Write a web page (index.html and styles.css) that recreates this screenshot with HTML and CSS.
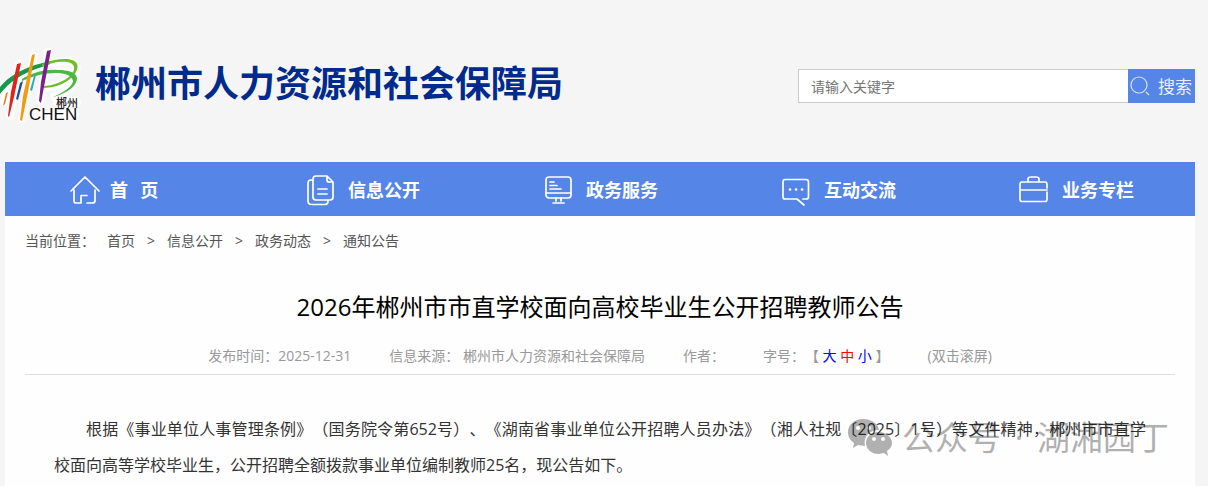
FILE: index.html
```html
<!DOCTYPE html>
<html lang="zh-CN">
<head>
<meta charset="utf-8">
<title>2026年郴州市市直学校面向高校毕业生公开招聘教师公告</title>
<link rel="stylesheet" href="styles.css">
</head>
<body>
<header class="header">
  <div class="brand">
    <svg class="logo" viewBox="0 0 84 84" aria-hidden="true">
      <g fill="none" stroke="#fff" stroke-linecap="round" stroke-linejoin="round">
        <path stroke-width="8" d="M2 46C16 28 50 18 66 17C78 17 79 26 73 32C66 39 56 43 43 44M54 52C66 49 75 42 76 34C74 28 66 26 56 27M19 20L10 72M34 12L22 74M48 8L40 57M6 50L4 58"/>
        <path stroke-width="10" d="M58 58H76M34 71H74"/>
      </g>
      <path fill="#149a49" d="M0 43C8 33 20 26 35 21L50 17L50 20L36 25C22 30 10 37 0 50Z"/>
      <path fill="#6cbe2c" d="M42 20C56 14 74 13 77 20C80 28 69 37 62 40C55 43 48 44 42 44L42 42C54 42 65 37 71 31C77 24 74 19 67 18C58 17 50 19 42 23Z"/>
      <path fill="#4cb648" d="M22 35C34 28 46 25 58 26C68 26 76 28 77 34C77 43 65 50 53 53C63 49 73 42 73 37C72 31 64 29 56 29C44 29 33 32 22 37Z"/>
      <path fill="#e2231a" d="M17 20L21 19L14 53L9 73L8 72L11 48Z"/>
      <path fill="#f39a10" d="M32 11L35 10L28 48L22 77L20 76L23 52Z"/>
      <path fill="#7b1f8c" d="M47 7L51 6L43 48L41 59L39 57L41 38Z"/>
      <path fill="#1b4d9c" d="M20 39L23 37L18 56L16 55Z"/>
      <path fill="#29a7c9" d="M34 32L36 31L32 47L30 46Z"/>
      <path fill="#ef7d1a" d="M6 49L8 48L5 60L3 62Z"/>
      <text class="logo-cn" x="56" y="63">郴州</text>
      <text class="logo-en" x="29" y="76">CHEN</text>
    </svg>
    <h1 class="site-name">郴州市人力资源和社会保障局</h1>
  </div>
  <form class="search">
    <input class="search-input" type="text" placeholder="请输入关键字" aria-label="请输入关键字">
    <button class="search-button" type="button">
      <svg class="search-icon" viewBox="0 0 22 22" aria-hidden="true"><circle cx="10" cy="10" r="8"/><path d="M17 17l3 3"/></svg>
      <span>搜索</span>
    </button>
  </form>
</header>

<nav class="nav">
  <a class="nav-item" href="#">
    <svg class="nav-icon" viewBox="0 0 32 32" aria-hidden="true"><path d="M4 18L18 4L32 18M7 17V28Q7 30 9 30H14V22.500H20M20 30H25Q28 30 28 28V17"/></svg>
    <span class="nav-text">首&nbsp;&nbsp; 页</span>
  </a>
  <a class="nav-item" href="#">
    <svg class="nav-icon" viewBox="0 0 32 32" aria-hidden="true"><path d="M22 3H11Q8 3 8 6V24Q8 27 11 27H25Q28 27 28 24V9ZM22 3V7Q22 9 24 9H28M8 7H6Q3 7 3 10V28Q3 31.500 7 31.500H20Q23 31.500 23 28M13 16H22M13 21H22"/></svg>
    <span class="nav-text">信息公开</span>
  </a>
  <a class="nav-item" href="#">
    <svg class="nav-icon" viewBox="0 0 32 32" aria-hidden="true"><rect x="3" y="4" width="25" height="21" rx="3"/><path d="M3 20H28M7 9H11M7 12.500H14M7 16H18M13 25V28M18 25V28M10 30H21"/></svg>
    <span class="nav-text">政务服务</span>
  </a>
  <a class="nav-item" href="#">
    <svg class="nav-icon" viewBox="0 0 32 32" aria-hidden="true"><path d="M22 26H25Q27.500 26 27.500 24V9Q27.500 6.500 25 6.500H4Q2 6.500 2 9V24Q2 26 4 26H16L23 32"/><path class="dots" d="M9 16.500h.1M15 16.500h.1M21 16.500h.1"/></svg>
    <span class="nav-text">互动交流</span>
  </a>
  <a class="nav-item" href="#">
    <svg class="nav-icon" viewBox="0 0 32 32" aria-hidden="true"><path d="M28 15V11.500Q28 9 26 9H3Q1 9 1 11.500V26Q1 28.500 3 28.500H26Q28 28.500 28 26V19M1 17H28M9 9V6Q9 4 12 4H17Q20 4 20 6V9"/></svg>
    <span class="nav-text">业务专栏</span>
  </a>
</nav>

<main class="page">
  <div class="crumbs">
    <span>当前位置：</span>
    <a href="#">首页</a><span>&gt;</span>
    <a href="#">信息公开</a><span>&gt;</span>
    <a href="#">政务动态</a><span>&gt;</span>
    <a href="#">通知公告</a>
  </div>
  <article>
    <h2 class="title">2026年郴州市市直学校面向高校毕业生公开招聘教师公告</h2>
    <div class="meta">
      <span>发布时间：2025-12-31</span>
      <span>信息来源： 郴州市人力资源和社会保障局</span>
      <span>作者：</span>
      <span>字号：【 <a class="size" href="#">大</a> <a class="size current" href="#">中</a> <a class="size" href="#">小</a> 】</span>
      <span>(双击滚屏)</span>
    </div>
    <div class="content">
      <p class="paragraph">根据《事业单位人事管理条例》（国务院令第652号）、《湖南省事业单位公开招聘人员办法》（湘人社规〔2025〕1号）等文件精神，郴州市市直学校面向高等学校毕业生，公开招聘全额拨款事业单位编制教师25名，现公告如下。</p>
      <div class="watermark">
        <svg class="watermark-icon" viewBox="0 0 44 38" aria-hidden="true">
          <path fill-rule="evenodd" d="M15 0C6 0 0 6 0 13C0 18 2 21 6 24L5 29L10 26L17 27C15 17 22 11 31 11C30 4 23 0 15 0ZM10 7a2 2 0 1 1 0 4a2 2 0 1 1 0-4M21 7a2 2 0 1 1 0 4a2 2 0 1 1 0-4"/>
          <path fill-rule="evenodd" d="M31 13C23 13 18 18 18 24C18 30 23 35 31 35L36 34L40 37L39 32C42 30 44 27 44 24C44 18 38 13 31 13ZM26 18a2 2 0 1 1 0 4a2 2 0 1 1 0-4M35 18a2 2 0 1 1 0 4a2 2 0 1 1 0-4"/>
        </svg>
        <span>公众号</span><span class="watermark-dot"></span><span>湖湘园丁</span>
      </div>
    </div>
  </article>
</main>
</body>
</html>
```
FILE: styles.css
```css
* { box-sizing: border-box; }

body {
  margin: 0;
  background: #f5f5f5;
  color: #333;
  font: 14px/20px "Open Sans", "Noto Sans CJK SC", sans-serif;
  text-spacing-trim: space-all;
}

a { color: inherit; text-decoration: none; }

.header {
  display: flex;
  align-items: center;
  justify-content: space-between;
  padding: 44px 13px 34px 0;
}

.brand { display: flex; align-items: flex-start; gap: 11px; }
.logo { width: 84px; height: 84px; }
.logo-cn { font: 500 11px "Noto Sans CJK SC", sans-serif; fill: #222; }
.logo-en { font: 17px "Liberation Sans", sans-serif; fill: #111; }

.site-name {
  margin: 0;
  padding-top: 13px;
  color: #002b8c;
  font-family: "Noto Sans CJK SC", sans-serif;
  font-size: 36px;
  line-height: 48px;
}

.search { display: flex; width: 397px; }

.search-input {
  flex: 1;
  min-width: 0;
  height: 34px;
  padding: 0 12px;
  border: 1px solid #ccc;
  border-right: 0;
  border-radius: 0;
  background: #fff;
  color: #333;
  font: inherit;
}
.search-input::placeholder { color: #757575; }

.search-button {
  display: flex;
  align-items: center;
  gap: 7px;
  width: 67px;
  padding: 0 0 0 1px;
  border: 0;
  background: #5585e7;
  color: #e8effc;
  font: 17px/34px "Noto Sans CJK SC", sans-serif;
  white-space: nowrap;
}
.search-icon { width: 22px; height: 22px; fill: none; stroke: #d5e1fa; stroke-width: 1.2; }

.nav {
  display: grid;
  grid-template-columns: repeat(5, 1fr);
  margin: 0 13px 0 5px;
  background: #5585e7;
  color: #fff;
  font-family: "Noto Sans CJK SC", sans-serif;
}
.nav-item {
  display: flex;
  align-items: center;
  gap: 11px;
  padding: 11px 0 11px 62px;
}
.nav-icon {
  width: 32px;
  height: 32px;
  overflow: visible;
  fill: none;
  stroke: #fff;
  stroke-width: 1.7;
  stroke-linecap: round;
  stroke-linejoin: round;
}
.dots { stroke-width: 2.6; }
.nav-text { font-size: 18px; font-weight: bold; line-height: 32px; }

.page {
  margin: 0 13px 0 5px;
  padding: 15px 20px 0;
  background: #fefefe;
}

.crumbs { display: flex; gap: 12px; color: #555; }

.title {
  margin: 38px 0 0;
  color: #000;
  font-size: 24px;
  font-weight: normal;
  line-height: 36px;
  text-align: center;
}

.meta {
  display: flex;
  justify-content: center;
  gap: 38px;
  padding: 21px 0 8px;
  border-bottom: 1px solid #ddd;
  color: #999;
}
.size { color: #00f; }
.size.current { color: #f00; }

.content {
  position: relative;
  padding: 36px 29px 12px;
}
.paragraph {
  margin: 0;
  font-size: 16px;
  line-height: 36px;
  text-align: justify;
  text-indent: 2em;
}

.watermark {
  position: absolute;
  top: 39px;
  right: 6px;
  display: flex;
  align-items: center;
  color: #000;
  font-size: 33px;
  line-height: 48px;
  opacity: 0.3;
}
.watermark-icon { width: 44px; height: 38px; margin-right: 10px; fill: #000; }
.watermark-dot { width: 4px; height: 4px; margin: 0 16px; border-radius: 50%; background: #000; }
```
